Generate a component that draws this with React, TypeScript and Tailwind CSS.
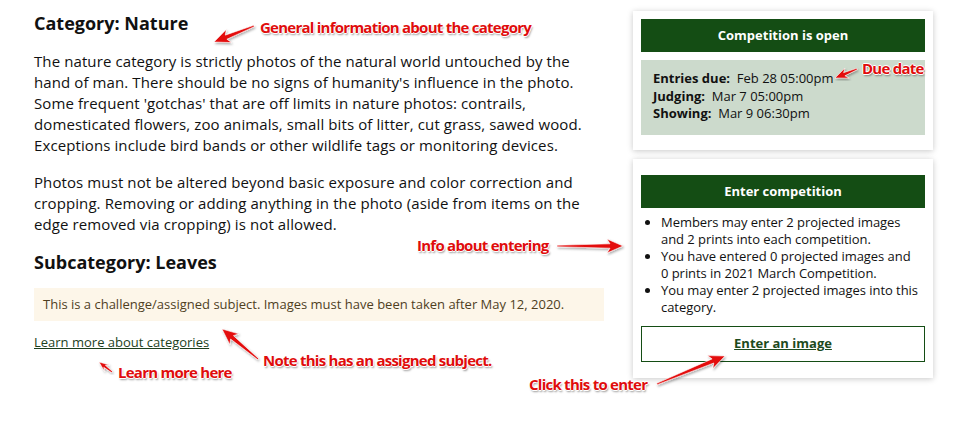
import React from "react";

type Pt = [number, number];

// tapered "skitch" style arrow, tail -> tip
function arrowPoints(tail: Pt, tip: Pt, head = 13, shaft = 4.4, wing = 7): string {
  const dx = tip[0] - tail[0];
  const dy = tip[1] - tail[1];
  const len = Math.hypot(dx, dy);
  const ux = dx / len;
  const uy = dy / len;
  const nx = -uy;
  const ny = ux;
  const at = (s: number, t: number) =>
    `${(tail[0] + ux * s + nx * t).toFixed(2)},${(tail[1] + uy * s + ny * t).toFixed(2)}`;
  return [
    at(0, -0.7),
    at(len - head, -shaft / 2),
    at(len - head - 3, -wing),
    at(len, 0),
    at(len - head - 3, wing),
    at(len - head, shaft / 2),
    at(0, 0.7),
  ].join(" ");
}

const arrows: { tail: Pt; tip: Pt; head?: number; shaft?: number; wing?: number }[] = [
  { tail: [254, 26], tip: [214, 42] },
  { tail: [857, 69], tip: [835, 78], head: 10, shaft: 3.4, wing: 5.5 },
  { tail: [557, 246], tip: [623, 246] },
  { tail: [258, 359], tip: [222, 329] },
  { tail: [112, 372], tip: [99, 362], head: 7, shaft: 2.6, wing: 4 },
  { tail: [657, 384], tip: [725, 356] },
];

const notes: { text: string; left: number; top: number }[] = [
  { text: "General information about the category", left: 260, top: 20 },
  { text: "Due date", left: 862, top: 61 },
  { text: "Info about entering", left: 417, top: 238 },
  { text: "Note this has an assigned subject.", left: 263, top: 353 },
  { text: "Learn more here", left: 118, top: 365 },
  { text: "Click this to enter", left: 529, top: 377 },
];

export default function App() {
  return (
    <div className="relative w-[964px] h-[424px] bg-white font-['Open_Sans',sans-serif] text-[#111]">
      <div className="flex pl-[34px] pt-[11px]">
        {/* Left: category info */}
        <div className="w-[570px]">
          <h1 className="mt-px text-[18px] leading-[22px] font-bold">Category: Nature</h1>
          <p className="mt-[17px] text-[15px] leading-[21px] tracking-[0.1px]">
            The nature category is strictly photos of the natural world untouched by the hand of man. There
            should be no signs of humanity's influence in the photo. Some frequent 'gotchas' that are off limits
            in nature photos: contrails, domesticated flowers, zoo animals, small bits of litter, cut grass,
            sawed wood. Exceptions include bird bands or other wildlife tags or monitoring devices.
          </p>
          <p className="mt-4 text-[15px] leading-[21px] tracking-[0.1px]">
            Photos must not be altered beyond basic exposure and color correction and cropping. Removing or
            adding anything in the photo (aside from items on the edge removed via cropping) is not allowed.
          </p>
          <h2 className="mt-4 text-[18px] leading-[22px] font-bold">Subcategory: Leaves</h2>
          <div className="mt-[15px] bg-[#fdf6e9] px-[9px] py-2 text-[13px] leading-[17px] text-[#4f3f1f]">
            This is a challenge/assigned subject. Images must have been taken after May 12, 2020.
          </div>
          <a href="#" className="mt-[13px] inline-block text-[13px] leading-[17px] text-[#1d3f1d] underline">
            Learn more about categories
          </a>
        </div>

        {/* Right: competition cards */}
        <div className="ml-[29px] w-[300px]">
          <div className="bg-white px-2 pt-2 pb-[15px] shadow-[0_1px_6px_rgba(0,0,0,0.22)]">
            <div className="flex h-[33px] items-center justify-center bg-[#144d14] text-[13px] font-bold text-white">
              Competition is open
            </div>
            <div className="mt-2 h-[75px] bg-[#ccdacc] px-3 pt-[10px] text-[13px] leading-[17.5px]">
              <div>
                <b>Entries due:</b>&nbsp; Feb 28 05:00pm
              </div>
              <div>
                <b>Judging:</b>&nbsp; Mar 7 05:00pm
              </div>
              <div>
                <b>Showing:</b>&nbsp; Mar 9 06:30pm
              </div>
            </div>
          </div>

          <div className="mt-[9px] bg-white px-2 pt-4 pb-4 shadow-[0_1px_6px_rgba(0,0,0,0.22)]">
            <div className="flex h-[33px] items-center justify-center bg-[#144d14] text-[13px] font-bold text-white">
              Enter competition
            </div>
            <ul className="mt-[6px] list-disc pl-5 pr-[5px] text-[13px] leading-[17px] tracking-[-0.05px]">
              <li>Members may enter 2 projected images and 2 prints into each competition.</li>
              <li>You have entered 0 projected images and 0 prints in 2021 March Competition.</li>
              <li>You may enter 2 projected images into this category.</li>
            </ul>
            <button
              type="button"
              className="mt-[10px] flex h-[36px] w-full items-center justify-center border border-[#144d14] text-[13px] font-bold text-[#1d4a1d] underline"
            >
              Enter an image
            </button>
          </div>
        </div>
      </div>

      {/* Annotations */}
      <svg className="pointer-events-none absolute inset-0" width="964" height="424">
        <defs>
          <filter id="sh" x="-20%" y="-20%" width="140%" height="140%">
            <feDropShadow dx="1" dy="1.5" stdDeviation="1" floodColor="#000" floodOpacity="0.35" />
          </filter>
        </defs>
        {arrows.map((a, i) => (
          <polygon
            key={i}
            points={arrowPoints(a.tail, a.tip, a.head, a.shaft, a.wing)}
            fill="#e30a0a"
            stroke="#fff"
            strokeWidth="0.6"
            filter="url(#sh)"
          />
        ))}
      </svg>
      {notes.map((n) => (
        <span
          key={n.text}
          className="pointer-events-none absolute whitespace-nowrap text-[15px] leading-[15px] font-bold tracking-[-0.75px] text-[#e00c0c] [text-shadow:1px_0_0_#fff,-1px_0_0_#fff,0_1px_0_#fff,0_-1px_0_#fff,1px_2px_2px_rgba(0,0,0,0.4)]"
          style={{ left: n.left, top: n.top }}
        >
          {n.text}
        </span>
      ))}
    </div>
  );
}
